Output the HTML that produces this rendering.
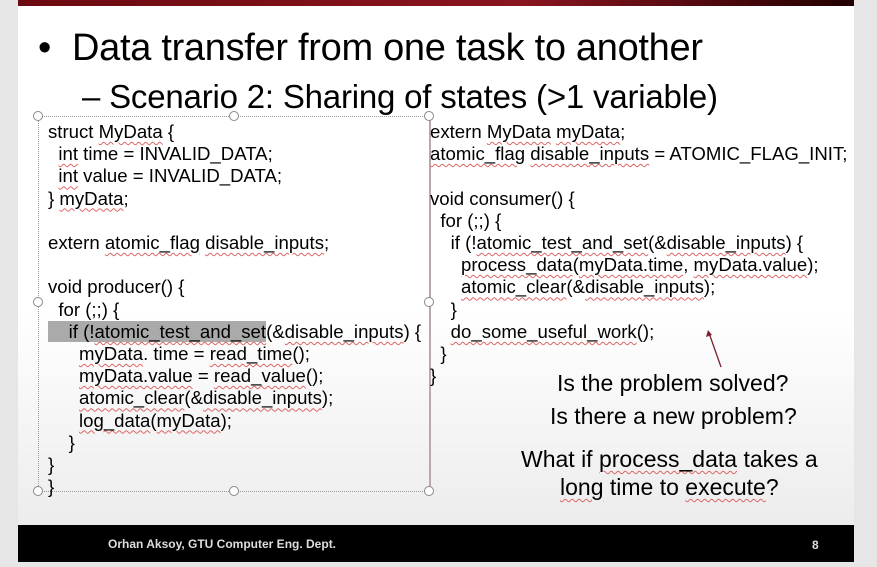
<!DOCTYPE html><html><head><style>
body{margin:0;width:877px;height:567px;background:#e6e6e6;position:relative;overflow:hidden;font-family:"Liberation Sans",Arial,sans-serif;}
#slide{position:absolute;left:18px;top:0;width:836px;height:563px;background:linear-gradient(#fff 0%,#fff 55%,#e9e9e9 100%);}
#top{position:absolute;left:18px;top:0;width:836px;height:6px;background:linear-gradient(90deg,#6b0a10,#8a1520 60%,#200);}
#foot{position:absolute;left:18px;top:525px;width:836px;height:37px;background:#000;color:#ddd;font-weight:bold;font-size:12px;}
.t{position:absolute;white-space:pre;color:#000;}
.c{font-size:18.6px;line-height:22.2px;}
u{text-decoration:underline wavy #d66;text-decoration-thickness:1px;text-underline-offset:3px;}
.h{position:absolute;width:8px;height:8px;border:1px solid #888;border-radius:50%;background:#fff;}
</style></head><body>
<div id="slide"></div><div id="top"></div>
<div class="t" style="left:38px;top:27px;font-size:38px">•</div>
<div class="t" style="left:72px;top:27px;font-size:38px;letter-spacing:-0.3px">Data transfer from one task to another</div>
<div class="t" style="left:82px;top:78px;font-size:33px;letter-spacing:-0.2px">– Scenario 2: Sharing of states (&gt;1 variable)</div>
<div style="position:absolute;left:38px;top:116px;width:390px;height:374px;border:1px dotted #999;border-right:2px solid #b9a9ab"></div>
<div class="h" style="left:33px;top:111px"></div><div class="h" style="left:229px;top:111px"></div><div class="h" style="left:424px;top:111px"></div>
<div class="h" style="left:33px;top:297px"></div><div class="h" style="left:424px;top:297px"></div>
<div class="h" style="left:33px;top:486px"></div><div class="h" style="left:229px;top:486px"></div><div class="h" style="left:424px;top:486px"></div>
<div style="position:absolute;left:48px;top:321px;width:218px;height:21px;background:#aaa"></div>
<div class="t c" style="left:48px;top:121px">struct <u>MyData</u> {
  <u>int</u> time = INVALID_DATA;
  <u>int</u> value = INVALID_DATA;
} <u>myData</u>;

extern <u>atomic_flag</u> <u>disable_inputs</u>;

void producer() {
  for (;;) {
    if (!<u>atomic_test_and_set</u>(&amp;<u>disable_inputs</u>) {
      <u>myData</u>. time = <u>read_time</u>();
      <u>myData.value</u> = <u>read_value</u>();
      <u>atomic_clear</u>(&amp;<u>disable_inputs</u>);
      <u>log_data</u>(<u>myData</u>);
    }
}
}</div>
<div class="t c" style="left:430px;top:121px">extern <u>MyData</u> <u>myData</u>;
<u>atomic_flag</u> <u>disable_inputs</u> = ATOMIC_FLAG_INIT;

void consumer() {
  for (;;) {
    if (!<u>atomic_test_and_set</u>(&amp;<u>disable_inputs</u>) {
      <u>process_data</u>(<u>myData.time</u>, <u>myData.value</u>);
      <u>atomic_clear</u>(&amp;<u>disable_inputs</u>);
    }
    <u>do_some_useful_work</u>();
  }
}</div>
<svg style="position:absolute;left:0;top:0" width="877" height="567"><line x1="721" y1="367" x2="709" y2="333" stroke="#7a2030" stroke-width="1.3"/><polygon points="708,330 706,337 712,335" fill="#7a2030"/></svg>
<div class="t" style="left:557px;top:370px;font-size:23px">Is the problem solved?</div>
<div class="t" style="left:550px;top:403px;font-size:23px">Is there a new problem?</div>
<div class="t" style="left:521px;top:446px;font-size:23px">What if <u>process_data</u> takes a</div>
<div class="t" style="left:560px;top:474px;font-size:23px"><u>long</u> time to <u>execute</u>?</div>
<div id="foot"><span style="position:absolute;left:90px;top:12px">Orhan Aksoy, GTU Computer Eng. Dept.</span><span style="position:absolute;left:794px;top:13px">8</span></div>
</body></html>
